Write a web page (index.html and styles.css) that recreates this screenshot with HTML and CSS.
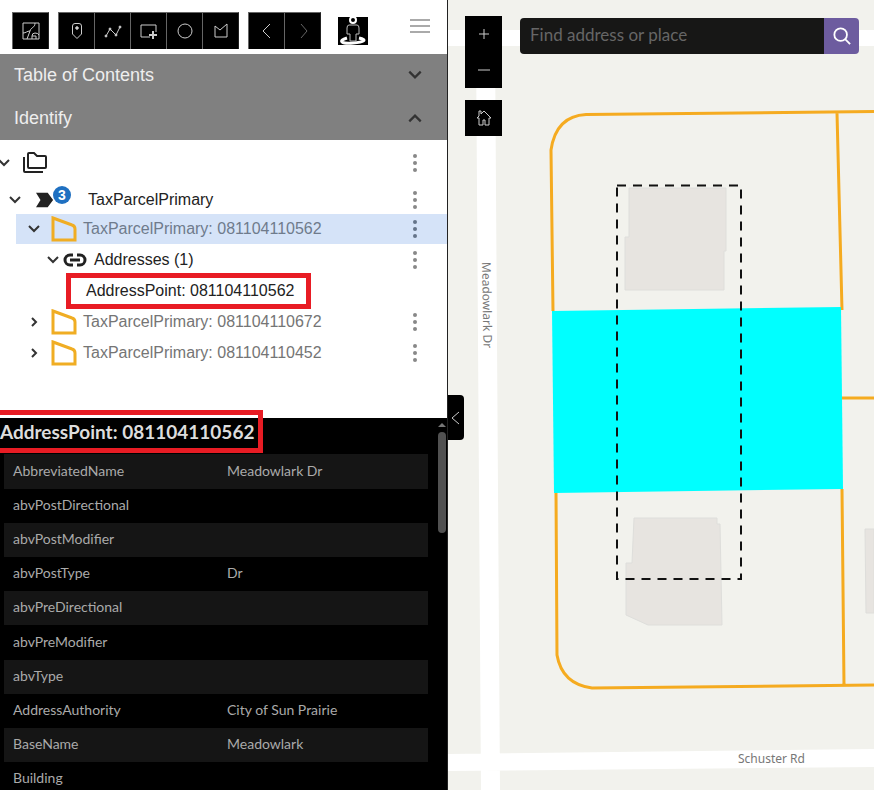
FILE: index.html
```html
<!DOCTYPE html>
<html lang="en">
<head>
<meta charset="utf-8">
<title>Parcel Identify</title>
<meta name="viewport" content="width=device-width, initial-scale=1">
<link rel="stylesheet" href="styles.css">
</head>
<body>
<svg class="defs" aria-hidden="true">
  <symbol id="down" viewBox="0 0 14 14"><path d="M2 4l5 5 5-5"/></symbol>
  <symbol id="up" viewBox="0 0 14 14"><path d="M2 10l5-5 5 5"/></symbol>
  <symbol id="right" viewBox="0 0 14 14"><path d="M5 3l4 4-4 4"/></symbol>
  <symbol id="dots" viewBox="0 0 6 20"><circle cx="3" cy="3" r="2"/><circle cx="3" cy="10" r="2"/><circle cx="3" cy="17" r="2"/></symbol>
  <symbol id="parcel" viewBox="0 0 26 26"><path d="M2 2L21 9Q24 10 24 13V24H2Z"/></symbol>
</svg>
<aside class="panel">
  <header class="toolbar">
    <div class="group">
      <button class="tool" aria-label="Select on map"><svg viewBox="0 0 20 20"><path d="M2 2h16v16H2zM14 2c0 5-4 4-5 8-3 0-4 2-7 2M9 10l-3 8M11 18v-3q0-3 3-3t4 2M11 15h4v3"/></svg></button>
    </div>
    <div class="group">
      <button class="tool" aria-label="Point"><svg viewBox="0 0 20 20"><path d="M5.500 5Q5.500 2.500 8 2.500h4q2.500 0 2.500 2.500v8L10 17.500 5.500 13z"/><circle cx="10" cy="7" r="1.300" fill="currentColor"/></svg></button>
      <button class="tool" aria-label="Line"><svg viewBox="0 0 20 20"><path d="M3 15l4-7 6 6 4-8"/><g fill="currentColor"><circle cx="3" cy="15" r="1"/><circle cx="7" cy="8" r="1"/><circle cx="13" cy="14" r="1"/><circle cx="17" cy="6" r="1"/></g></svg></button>
      <button class="tool" aria-label="Rectangle"><svg viewBox="0 0 20 20"><path d="M11 16H2V4h15v7"/><path class="bold" d="M14 10v8M10 14h8"/></svg></button>
      <button class="tool" aria-label="Circle"><svg viewBox="0 0 20 20"><circle cx="10" cy="10" r="7"/></svg></button>
      <button class="tool" aria-label="Polygon"><svg viewBox="0 0 20 20"><path d="M4 5l5 4 7-6v13H4z"/></svg></button>
    </div>
    <div class="group">
      <button class="tool" aria-label="Previous"><svg viewBox="0 0 20 20"><path d="M13 3l-7 7 7 7"/></svg></button>
      <button class="tool dim" aria-label="Next" disabled><svg viewBox="0 0 20 20"><path d="M8 3l6 7-6 7"/></svg></button>
    </div>
    <button class="street" aria-label="Street view"><svg viewBox="0 0 30 28"><path fill="none" stroke="#fff" stroke-width="3" d="M9 21C-1 24 4 27 15 26S30 23 21 21"/><path d="M11 8h8q2 0 2 3v6h-3v7h-6v-7H9v-6q0-3 2-3z" fill="#000" stroke="#bbb"/><circle cx="15" cy="3" r="3" fill="#000" stroke="#fff" stroke-width="2"/></svg></button>
    <button class="menu" aria-label="Menu"><span></span><span></span><span></span></button>
  </header>
  <button class="section">Table of Contents<svg><use href="#down"/></svg></button>
  <button class="section" aria-expanded="true">Identify<svg><use href="#up"/></svg></button>

  <ul class="tree">
    <li class="row root"><svg class="caret"><use href="#down"/></svg>
      <svg class="folders" viewBox="0 0 26 24"><path d="M7 2h5l3 3h8q1 0 1 1v10q0 1-1 1H7q-1 0-1-1V3q0-1 1-1zM2 6v14q0 1 1 1h18"/></svg>
      <button class="more" aria-label="Options"><svg><use href="#dots"/></svg></button></li>
    <li class="row layer"><svg class="caret"><use href="#down"/></svg>
      <span class="marker"><svg viewBox="0 0 20 18"><path d="M0 1h13l6 8-6 8H0l5-8z"/></svg><b>3</b></span><span>TaxParcelPrimary</span>
      <button class="more" aria-label="Options"><svg><use href="#dots"/></svg></button></li>
    <li class="row feature selected"><svg class="caret"><use href="#down"/></svg>
      <svg class="parcel"><use href="#parcel"/></svg><span>TaxParcelPrimary: 081104110562</span>
      <button class="more" aria-label="Options"><svg><use href="#dots"/></svg></button></li>
    <li class="row related"><svg class="caret"><use href="#down"/></svg>
      <svg class="link" viewBox="0 0 24 14"><path d="M10 2H7a5 5 0 0 0 0 10h3M14 2h3a5 5 0 0 1 0 10h-3M7 7h10"/></svg><span>Addresses (1)</span>
      <button class="more" aria-label="Options"><svg><use href="#dots"/></svg></button></li>
    <li class="row address"><span class="boxed">AddressPoint: 081104110562</span></li>
    <li class="row feature"><svg class="caret"><use href="#right"/></svg>
      <svg class="parcel"><use href="#parcel"/></svg><span>TaxParcelPrimary: 081104110672</span>
      <button class="more" aria-label="Options"><svg><use href="#dots"/></svg></button></li>
    <li class="row feature"><svg class="caret"><use href="#right"/></svg>
      <svg class="parcel"><use href="#parcel"/></svg><span>TaxParcelPrimary: 081104110452</span>
      <button class="more" aria-label="Options"><svg><use href="#dots"/></svg></button></li>
  </ul>

  <section class="details">
    <div class="title-box"></div>
    <div class="scroll"><i></i></div>
    <div class="content">
      <h2>AddressPoint: 081104110562</h2>
      <table>
        <tr><th>AbbreviatedName</th><td>Meadowlark Dr</td></tr>
        <tr><th>abvPostDirectional</th><td></td></tr>
        <tr><th>abvPostModifier</th><td></td></tr>
        <tr><th>abvPostType</th><td>Dr</td></tr>
        <tr><th>abvPreDirectional</th><td></td></tr>
        <tr><th>abvPreModifier</th><td></td></tr>
        <tr><th>abvType</th><td></td></tr>
        <tr><th>AddressAuthority</th><td>City of Sun Prairie</td></tr>
        <tr><th>BaseName</th><td>Meadowlark</td></tr>
        <tr><th>Building</th><td></td></tr>
      </table>
    </div>
  </section>
</aside>

<main class="map">
  <svg class="canvas" viewBox="448 0 426 790" preserveAspectRatio="xMinYMin slice">
    <path class="road" d="M448 30H874V46H448zM476 40h19l5 750h-19zM448 754L874 749V767L448 771z"/>
    <g class="building">
      <path d="M629 188h97v63h-2v39h-99v-53h4z"/>
      <path d="M634 518h83v6h3l2 101h-74l-22-10v-52h6z"/>
      <path d="M865 529h9v84h-8z"/>
    </g>
    <path class="edge" d="M553 311L551 150Q556 116 586 114.500L874 111.500M837 113L842 310M842 489L844 685M842 398H874M556 492L557 655Q562 684 592 688L874 685"/>
    <path class="hit" d="M552 311L841 307 843 489 554 493z"/>
    <path class="dash" d="M617 185.500H741V579H617z"/>
    <text x="738" y="763">Schuster Rd</text>
    <text transform="translate(482 262) rotate(89)">Meadowlark Dr</text>
  </svg>
  <button class="collapse" aria-label="Collapse panel"><svg viewBox="0 0 16 20"><path d="M11 4l-7 6 7 6"/></svg></button>
  <div class="controls">
    <div class="nav">
      <div class="zoom">
        <button aria-label="Zoom in"><svg viewBox="0 0 16 16"><path d="M8 3v10M3 8h10"/></svg></button>
        <button aria-label="Zoom out"><svg viewBox="0 0 16 16"><path d="M2 8h12"/></svg></button>
      </div>
      <button aria-label="Home"><svg viewBox="0 0 16 16"><path d="M1 8L3 6V1h2v3l3-3 7 7h-2v7H9v-5H7v5H3V8z"/></svg></button>
    </div>
    <form class="search">
      <input type="text" aria-label="Find address or place" placeholder="Find address or place">
      <button type="button" aria-label="Search"><svg viewBox="0 0 20 20"><circle cx="8.500" cy="8.500" r="7"/><path d="M13.500 13.500L19 19"/></svg></button>
    </form>
  </div>
</main>
</body>
</html>
```
FILE: styles.css
```css
* { box-sizing: border-box; }
body {
  margin: 0;
  height: 100vh;
  display: flex;
  overflow: hidden;
  background: #fff;
  font: 16px/20px "Liberation Sans", Arial, sans-serif;
  color: #222;
}
button { border: 0; padding: 0; margin: 0; background: none; font: inherit; color: inherit; }
svg { display: block; fill: none; stroke: currentColor; flex: none; }
.defs { position: absolute; width: 0; height: 0; }

.panel {
  flex: 0 0 448px;
  display: flex;
  flex-direction: column;
  border-right: 1px solid #222;
  min-height: 0;
}
.toolbar {
  display: flex;
  align-items: flex-start;
  gap: 9px;
  height: 54px;
  padding: 12px 17px 0 12px;
  flex: none;
}
.group { display: flex; background: #000; border-top: 1px solid #666; border-right: 1px solid #222; }
.tool {
  width: 36px;
  height: 36px;
  display: grid;
  place-items: center;
  border-left: 1px solid #666;
  color: #ccc;
}
.tool svg { width: 20px; height: 20px; }
.tool .bold { stroke-width: 2; }
.tool.dim { color: #666; }
.street { background: #000; margin: 5px 0 0 8px; }
.street svg { width: 30px; height: 28px; }
.menu { margin: 7px 0 0 auto; width: 20px; display: grid; gap: 4px; }
.menu span { height: 2px; background: #aaa; }

.section {
  flex: none;
  height: 43px;
  padding: 0 24px 2px 14px;
  display: flex;
  align-items: center;
  justify-content: space-between;
  background: #808080;
  color: #eee;
  font-size: 18px;
}
.section svg { width: 16px; height: 16px; stroke: #333; stroke-width: 2; }

.tree { list-style: none; margin: 0; padding: 6px 0 0; flex: 0 0 278px; }
.row { display: flex; align-items: center; height: 31px; padding-right: 29px; }
.caret { width: 14px; height: 14px; stroke: #333; stroke-width: 2; }
.more { margin-left: auto; }
.more svg { width: 6px; height: 20px; fill: #888; stroke: none; }
.root { height: 33px; margin-left: -3px; }
.folders { width: 28px; height: 24px; margin-left: 10px; stroke-width: 2; }
.layer { height: 35px; padding-top: 6px; margin: 0 0 0 8px; }
.marker { display: flex; width: 52px; margin: 0 0 0 14px; position: relative; }
.marker svg { width: 18px; height: 18px; fill: #222; stroke: none; }
.marker b {
  position: absolute;
  left: 17px;
  top: -5px;
  width: 18px;
  height: 18px;
  border-radius: 50%;
  background: #1f70c1;
  color: #fff;
  font-size: 14px;
  line-height: 18px;
  text-align: center;
}
.feature { margin-left: 16px; padding-left: 11px; color: #757575; }
.parcel { width: 26px; height: 26px; margin: 0 6px 0 10px; stroke: #f0ad23; stroke-width: 3; }
.selected { height: 30px; background: #d5e3f8; color: #6f7b8c; }
.selected .more svg { fill: #65748a; }
.related { padding-left: 46px; }
.link { width: 24px; height: 14px; margin: 0 7px 0 3px; stroke-width: 3; }
.address { padding-left: 66px; }
.boxed { border: 5px solid #e81c24; padding: 3px 12px 3px 15px; line-height: 20px; }

.details { position: relative; flex: 1; min-height: 0; background: #000; font-family: Lato, sans-serif; }
.content { height: 100%; overflow: hidden; padding: 0 19px 0 4px; }
.details h2 { margin: 0 0 0 -4px; height: 36px; font-size: 19px; line-height: 27px; color: #ddd; white-space: nowrap; }
.title-box { position: absolute; left: -5px; top: -8px; width: 268px; height: 43px; border: 5px solid #e81c24; }
.scroll { position: absolute; right: 1px; top: 5px; width: 8px; }
.scroll::before { content: ""; display: block; margin-bottom: 5px; border: 4px solid transparent; border-top: 0; border-bottom: 4px solid #777; }
.scroll i { display: block; height: 101px; border-radius: 4px; background: #515151; }
table { width: 100%; border-collapse: collapse; table-layout: fixed; font-size: 14px; line-height: 20px; color: #aaa; }
tr { height: 34px; }
tr:nth-child(5n+1) { height: 35px; }
tr:nth-child(odd) { background: #151515; }
th, td { padding: 0 9px 2px; text-align: left; font-weight: 400; }
th { width: 214px; }

.map { position: relative; flex: 1; min-width: 0; background: #f2f2ed; overflow: hidden; }
.canvas { position: absolute; width: 100%; height: 100%; }
.road { fill: #fff; stroke: none; }
.building { fill: #e7e4e0; stroke: #dededb; stroke-width: 1; }
.edge { stroke: #f5ab20; stroke-width: 3; }
.hit { fill: #0ff; stroke: none; }
.dash { stroke: #111; stroke-width: 2; stroke-dasharray: 9 7; }
.canvas text { font: 12px "Noto Sans", sans-serif; fill: #777; stroke: none; }
.collapse {
  position: absolute;
  left: 0;
  top: 395px;
  width: 16px;
  height: 45px;
  background: #000;
  border-radius: 0 4px 4px 0;
  color: #ccc;
}
.collapse svg { width: 16px; height: 20px; }
.controls { position: relative; display: flex; align-items: flex-start; gap: 18px; padding: 16px 15px 0 17px; }
.nav { display: grid; gap: 12px; color: #ccc; }
.nav button { width: 37px; height: 36px; display: grid; place-items: center; background: #000; }
.zoom { background: #000; }
.nav svg { width: 16px; height: 16px; }
.search { flex: 1; min-width: 0; display: flex; height: 36px; margin-top: 2px; border-radius: 4px; overflow: hidden; }
.search input {
  flex: 1;
  min-width: 0;
  border: 0;
  padding: 0 10px 2px;
  background: #171716;
  color: #ddd;
  font: 17px/20px Lato, sans-serif;
}
.search input::placeholder { color: #666; }
.search button { width: 35px; display: grid; place-items: center; background: #6d5c9f; color: #fff; }
.search svg { width: 18px; height: 18px; stroke-width: 2; }
```
